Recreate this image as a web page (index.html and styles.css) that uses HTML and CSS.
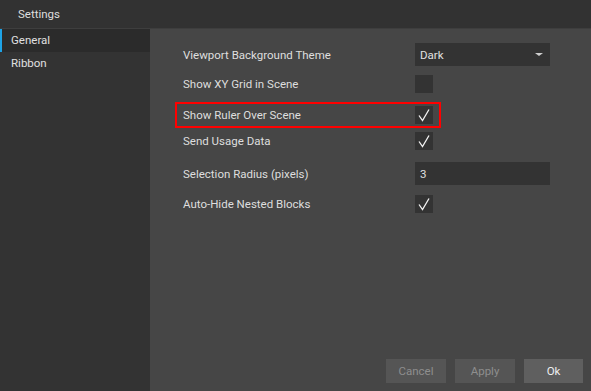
FILE: index.html
```html
<!DOCTYPE html>
<html>
<head>
<meta charset="utf-8">
<link rel="stylesheet" href="styles.css">
</head>
<body>
<div class="window">
  <div class="titlebar">Settings</div>
  <div class="body">
    <nav class="sidebar">
      <div class="nav-item active">General</div>
      <div class="nav-item">Ribbon</div>
    </nav>
    <main class="panel">
      <div class="rows">
        <div class="row r1">
          <span class="label">Viewport Background Theme</span>
          <div class="select"><span>Dark</span><span class="caret"></span></div>
        </div>
        <div class="row r2">
          <span class="label">Show XY Grid in Scene</span>
          <div class="check"></div>
        </div>
        <div class="row r3 highlight">
          <span class="label">Show Ruler Over Scene</span>
          <div class="check"><svg viewBox="0 0 18 18"><path d="M4 9.5 L7.5 14.5 L14 3.5" /></svg></div>
        </div>
        <div class="row r4">
          <span class="label">Send Usage Data</span>
          <div class="check"><svg viewBox="0 0 18 18"><path d="M4 9.5 L7.5 14.5 L14 3.5" /></svg></div>
        </div>
        <div class="row r5">
          <span class="label">Selection Radius (pixels)</span>
          <div class="input">3</div>
        </div>
        <div class="row r6">
          <span class="label">Auto-Hide Nested Blocks</span>
          <div class="check"><svg viewBox="0 0 18 18"><path d="M4 9.5 L7.5 14.5 L14 3.5" /></svg></div>
        </div>
      </div>
      <div class="buttons">
        <button class="btn disabled">Cancel</button>
        <button class="btn disabled">Apply</button>
        <button class="btn primary">Ok</button>
      </div>
    </main>
  </div>
</div>
</body>
</html>
```

FILE: styles.css
```css
* { box-sizing: border-box; }
html, body { margin: 0; padding: 0; }
body {
  width: 591px;
  height: 391px;
  overflow: hidden;
  font-family: Roboto, "Liberation Sans", sans-serif;
  font-size: 11.5px;
  color: #e0e0e0;
  background: #333333;
}
.window { display: flex; flex-direction: column; height: 391px; }
.titlebar {
  height: 29px;
  flex: none;
  padding-left: 18px;
  line-height: 28px;
  background: #323232;
  border-bottom: 1px solid #3e3e3e;
  color: #dedede;
}
.body { flex: 1; display: flex; min-height: 0; }
.sidebar {
  width: 150px;
  flex: none;
  background: #333333;
}
.nav-item {
  height: 23px;
  line-height: 23px;
  padding-left: 9px;
  color: #e0e0e0;
  border-left: 2px solid transparent;
}
.nav-item.active {
  background: #2b2b2b;
  border-left-color: #1ea3e6;
}
.panel {
  flex: 1;
  background: #464646;
  display: flex;
  flex-direction: column;
  justify-content: space-between;
  padding: 14px 8px 8px 26px;
}
.rows { display: flex; flex-direction: column; }
.row {
  display: flex;
  align-items: center;
  justify-content: space-between;
  width: 264px;
  padding-left: 7px;
  position: relative;
}
.label { color: #dedede; }
.r1 { height: 23px; width: 374px; }
.r2 { height: 18px; margin-top: 9px; width: 257px; }
.r3 { height: 24px; margin-top: 10px; padding-right: 7px; }
.r4 { height: 18px; margin-top: 5px; width: 257px; }
.r5 { height: 23px; margin-top: 12px; width: 374px; }
.r6 { height: 18px; margin-top: 10px; width: 257px; }
.highlight {
  outline: 2px solid #ff0000;
  outline-offset: -1px;
}
.select, .input {
  width: 135px;
  height: 23px;
  background: #333333;
  color: #e0e0e0;
  display: flex;
  align-items: center;
  justify-content: space-between;
  padding: 0 6px 0 5px;
}
.caret {
  width: 0; height: 0;
  border-left: 4px solid transparent;
  border-right: 4px solid transparent;
  border-top: 3px solid #cfcfcf;
  margin-right: 1px;
}
.check {
  width: 18px;
  height: 18px;
  background: #333333;
}
.check svg { width: 18px; height: 18px; display: block; }
.check path { fill: none; stroke: #f2f2f2; stroke-width: 1.3; }
.buttons {
  display: flex;
  justify-content: flex-end;
  gap: 9px;
}
.btn {
  width: 60px;
  height: 24px;
  border: none;
  font-family: inherit;
  font-size: 11.5px;
  padding: 0;
}
.btn.disabled { background: #555555; color: #8e8e8e; }
.btn.primary { background: #5f5f5f; color: #f0f0f0; width: 59px; }
```
